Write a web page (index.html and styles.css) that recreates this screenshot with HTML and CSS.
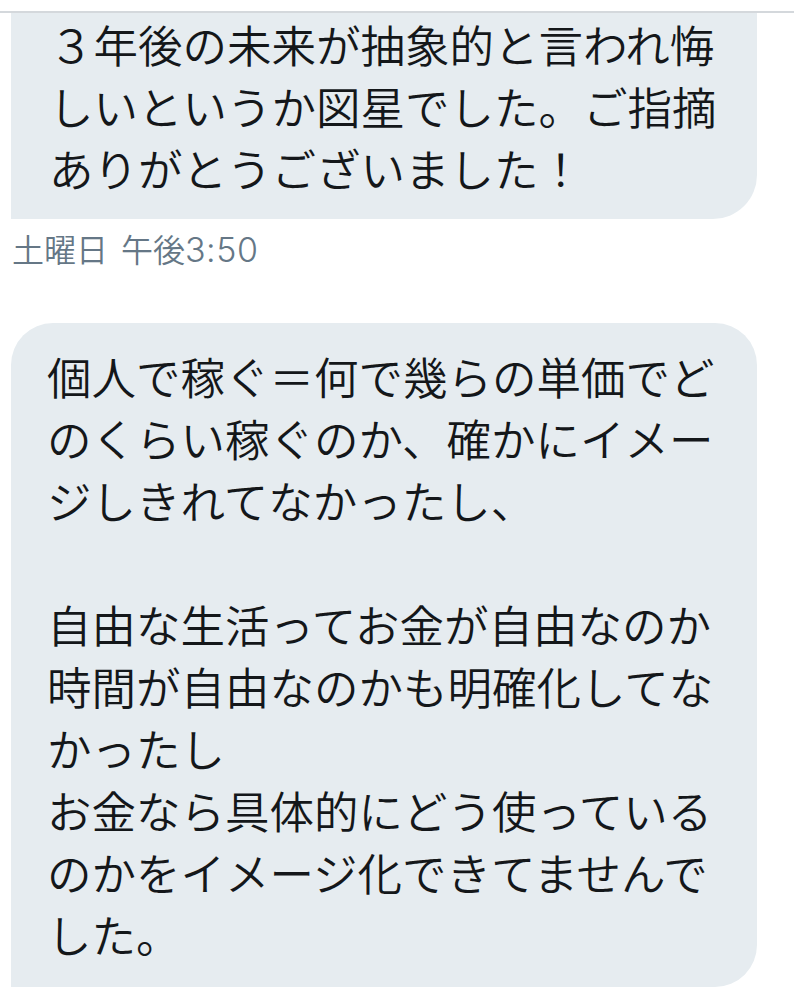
FILE: index.html
```html
<!DOCTYPE html>
<html lang="ja">
<head>
    <meta charset="UTF-8">
    <title>メッセージ</title>
    <link rel="stylesheet" href="styles.css">
</head>
<body>
    <div class="topbar"></div>
    <div class="thread">
        <div class="thread-inner">
            <div class="bubble bubble-cut">
                ３年後の未来が抽象的と言われ悔<br>しいというか図星でした。ご指摘<br>ありがとうございました！
            </div>
            <div class="stamp">土曜日 午後<span class="stamp-time">3:50</span></div>
            <div class="bubble">
                個人で稼ぐ＝何で幾らの単価でど<br>のくらい稼ぐのか、確かにイメー<br>ジしきれてなかったし、<br>
                <br>
                自由な生活ってお金が自由なのか<br>時間が自由なのかも明確化してな<br>かったし<br>お金なら具体的にどう使っている<br>のかをイメージ化できてませんで<br>した。
            </div>
        </div>
    </div>
</body>
</html>
```

FILE: styles.css
```css
html, body {
    margin: 0;
    padding: 0;
    background: #fff;
}

body {
    width: 794px;
    height: 1005px;
    overflow: hidden;
    font-family: "Noto Sans CJK JP", sans-serif;
    color: #14171a;
}

.topbar {
    height: 11px;
    border-bottom: 2px solid #d4d8dc;
    position: relative;
    z-index: 1;
    background: #fff;
}

.thread {
    padding: 0 37px 0 11px;
}

/* the thread is scrolled: the first bubble runs up under the bar */
.thread-inner {
    margin-top: -70px;
}

.bubble {
    background: #e6ecf0;
    font-size: 44.5px;
    font-weight: 350;
    line-height: 62px;
    padding: 22px 30px 22px 36px;
    border-radius: 42px 42px 42px 0;
    white-space: nowrap;
}

.bubble-cut {
    padding: 70px 30px 20px 38px;
    border-radius: 44px 44px 44px 0;
}

.stamp {
    font-family: "Inter", "Noto Sans CJK JP", sans-serif;
    font-size: 32px;
    font-weight: 350;
    line-height: 42px;
    word-spacing: 4px;
    color: #657786;
    padding-left: 1px;
    margin: 10px 0 51px;
}

.stamp-time {
    font-size: 34px;
    letter-spacing: 0.5px;
}
```
